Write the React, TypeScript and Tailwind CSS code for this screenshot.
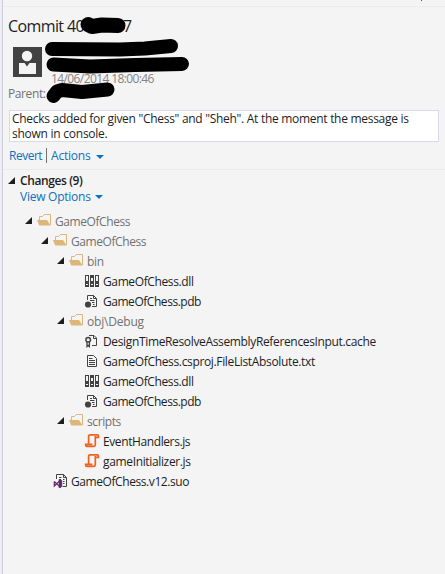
import type { ReactNode } from 'react';

type Kind = 'folder' | 'dll' | 'pdb' | 'cert' | 'text' | 'script' | 'suo';

function FolderIcon() {
  return (
    <svg width="16" height="16" viewBox="0 0 16 16" fill="none">
      <path d="M3.5 8V4.5H6.5L8.5 2.5H14.5V13" stroke="#dcb67a" strokeWidth="1" />
      <path d="M1 8H11L14.5 13.5H3.2Z" fill="#dcb67a" />
    </svg>
  );
}

function DllIcon() {
  return (
    <svg width="16" height="16" viewBox="0 0 16 16" shapeRendering="crispEdges">
      {[1, 6, 11].map((x) => (
        <g key={x}>
          <rect x={x} y="2" width="4" height="12" fill="#424242" />
          <rect x={x + 1} y={x === 6 ? 5 : 3} width="2" height={x === 6 ? 3 : 5} fill="#f4f4f4" />
          <rect x={x + 1} y="11" width="2" height="1" fill="#f4f4f4" />
        </g>
      ))}
    </svg>
  );
}

function PdbIcon() {
  return (
    <svg width="16" height="16" viewBox="0 0 16 16" fill="none" stroke="#424242">
      <path d="M3.5 7V2.5H9.5L12.5 5.5V13.5H8" />
      <path d="M9.5 2.5V5.5H12.5M6 5.5H8M6 7.5H10.5M8 9.5H10.5M9 11.5H10.5" />
      <circle cx="4" cy="11.5" r="3.1" fill="#424242" stroke="none" />
    </svg>
  );
}

function CertIcon() {
  return (
    <svg width="16" height="16" viewBox="0 0 16 16" fill="none" stroke="#424242">
      <path d="M5 2.5H10L12.5 5V12.5H8" />
      <path d="M9.5 2.5V5.5H12.5" />
      <circle cx="4.2" cy="6.8" r="2.3" strokeWidth="1.5" />
      <path d="M3 9V13.5L4.2 12.4L5.4 13.5V9" strokeWidth="1.3" />
    </svg>
  );
}

function TextIcon() {
  return (
    <svg width="16" height="16" viewBox="0 0 16 16" fill="none" stroke="#424242">
      <path d="M3.5 2.5H9.5L12.5 5.5V13.5H3.5Z" />
      <path d="M5 5.5H8.5M5 7.5H11M5 9.5H11M5 11.5H11" />
    </svg>
  );
}

function ScriptIcon() {
  return (
    <svg width="16" height="16" viewBox="0 0 16 16" fill="none" stroke="#ee6221" strokeWidth="1.7">
      <path d="M11.3 3V11.7C11.3 12.8 10.7 13.3 9.8 13.3H2.8C1.9 13.3 1.6 12.5 1.6 11.3H8.4" />
      <path d="M4.6 11V3.5C4.6 2.3 5.2 1.8 6.2 1.8H13.5C14.3 1.8 14.5 2.7 14.5 4.3H11.5" />
    </svg>
  );
}

function SuoIcon() {
  return (
    <svg width="16" height="16" viewBox="0 0 16 16" fill="none" stroke="#424242">
      <path d="M3.5 6V1.5H10.5L13.5 4.5V13.5H9.5" />
      <path d="M10.5 1.5V4.5H13.5M6 4.5H8.5M6 6.5H8M10 6.5H11.5M10 8.5H11.5M10 10.5H11.5" />
      <path d="M1.3 8.5V13L7 7.6V13.9L1.3 8.5" stroke="#68217a" strokeWidth="1.2" />
      <path d="M6.2 6.5L8.7 7.5V13.5L6.2 14.7Z" fill="#68217a" />
    </svg>
  );
}

const icons: Record<Kind, () => ReactNode> = {
  folder: FolderIcon,
  dll: DllIcon,
  pdb: PdbIcon,
  cert: CertIcon,
  text: TextIcon,
  script: ScriptIcon,
  suo: SuoIcon,
};

function Expander() {
  return (
    <svg width="7" height="7" viewBox="0 0 7 7" className="shrink-0">
      <path d="M7 0V7H0Z" fill="#1e1e1e" />
    </svg>
  );
}

function DropArrow() {
  return (
    <svg width="8" height="4" viewBox="0 0 8 4" className="mt-[2px] shrink-0">
      <path d="M0 0H8L4 4Z" fill="#0e70c0" />
    </svg>
  );
}

const rows: { name: string; kind: Kind; indent: string; tracking: string }[] = [
  { name: 'GameOfChess', kind: 'folder', indent: 'pl-[22px]', tracking: 'tracking-[-0.42px]' },
  { name: 'GameOfChess', kind: 'folder', indent: 'pl-[38px]', tracking: 'tracking-[-0.42px]' },
  { name: 'bin', kind: 'folder', indent: 'pl-[54px]', tracking: 'tracking-[-0.3px]' },
  { name: 'GameOfChess.dll', kind: 'dll', indent: 'pl-[81px]', tracking: 'tracking-[-0.38px]' },
  { name: 'GameOfChess.pdb', kind: 'pdb', indent: 'pl-[81px]', tracking: 'tracking-[-0.46px]' },
  { name: 'obj\\Debug', kind: 'folder', indent: 'pl-[54px]', tracking: 'tracking-[-0.2px]' },
  { name: 'DesignTimeResolveAssemblyReferencesInput.cache', kind: 'cert', indent: 'pl-[81px]', tracking: 'tracking-[-0.35px]' },
  { name: 'GameOfChess.csproj.FileListAbsolute.txt', kind: 'text', indent: 'pl-[81px]', tracking: 'tracking-[-0.35px]' },
  { name: 'GameOfChess.dll', kind: 'dll', indent: 'pl-[81px]', tracking: 'tracking-[-0.38px]' },
  { name: 'GameOfChess.pdb', kind: 'pdb', indent: 'pl-[81px]', tracking: 'tracking-[-0.46px]' },
  { name: 'scripts', kind: 'folder', indent: 'pl-[54px]', tracking: 'tracking-[-0.4px]' },
  { name: 'EventHandlers.js', kind: 'script', indent: 'pl-[81px]', tracking: 'tracking-[-0.4px]' },
  { name: 'gameInitializer.js', kind: 'script', indent: 'pl-[81px]', tracking: 'tracking-[-0.35px]' },
  { name: 'GameOfChess.v12.suo', kind: 'suo', indent: 'pl-[50px]', tracking: 'tracking-[-0.42px]' },
];

function TreeRow({ name, kind, indent, tracking }: (typeof rows)[number]) {
  const Icon = icons[kind];
  const folder = kind === 'folder';
  const gap = kind === 'suo' ? 'mr-[2px]' : 'mr-[3px]';
  return (
    <div className={`flex h-5 items-center ${indent}`}>
      {folder && (
        <span className="mt-[-3px] mr-1 flex">
          <Expander />
        </span>
      )}
      <span className={`${gap} ${folder ? 'mt-[-4px]' : 'mt-[-2px]'}`}>
        <Icon />
      </span>
      <span className={`mt-[-1px] ${tracking} ${folder ? 'text-[#717171]' : 'text-[#1e1e1e]'}`}>{name}</span>
    </div>
  );
}

function Redactions() {
  return (
    <svg
      className="absolute top-0 left-0"
      width="225"
      height="110"
      viewBox="0 0 225 110"
      fill="none"
      stroke="#000"
      strokeLinecap="round"
      strokeLinejoin="round"
    >
      <path d="M88 24.5L92 26.5L102 25L118 25.5" strokeWidth="15" />
      <path d="M52 49L120 49.5L145 48.5L171 46" strokeWidth="14" />
      <path d="M53.5 64.5L90 66.5L135 65L182 64" strokeWidth="14" />
      <path d="M53.5 96L57 91.5L62 90L82 92L107.5 89.5" strokeWidth="14" />
    </svg>
  );
}

export default function App() {
  return (
    <div className="relative flex h-[574px] w-[445px] overflow-hidden bg-[#f4f4f4] font-['Open_Sans','Noto_Sans',sans-serif] text-[12px] leading-[15px] whitespace-nowrap text-[#1e1e1e]">
      <div className="w-[3px] shrink-0 border-r border-[#cccedb] bg-[#eeeef2]" />
      <div className="flex min-w-0 flex-1 flex-col">
        <div className="flex h-[7px] items-start justify-end border-b border-[#ececec] pr-[23px]">
          <span className="h-px w-px bg-[#555555]" />
        </div>

        <div className="mt-[8px] flex h-[22px] items-center pl-[5px] text-[16px]">
          <span className="w-[115px] tracking-[-0.6px]">Commit 40</span>
          <span>7</span>
        </div>

        <div className="mt-[10px] flex h-[41px] pl-[10px]">
          <svg width="29" height="30" viewBox="0 0 29 30">
            <rect width="29" height="30" fill="#424242" />
            <circle cx="14" cy="9" r="5.2" fill="#f4f4f4" />
            <path d="M6 16H11.5L14 19.5L16.5 16H23V27H6Z" fill="#f4f4f4" />
          </svg>
          <span className="mt-[24px] ml-[9px] tracking-[-0.6px] text-[#848484]">14/06/2014 18:00:46</span>
        </div>
        <div className="mt-[-2px] pl-[5px] tracking-[-0.4px] text-[#717171]">Parent:</div>

        <div className="mt-[9px] mr-[6px] ml-[6px] h-[32px] border border-[#dadae6] bg-white pl-[2px]">
          <div className="tracking-[-0.29px]">Checks added for given "Chess" and "Sheh". At the moment the message is</div>
          <div className="tracking-[-0.25px]">shown in console.</div>
        </div>

        <div className="mt-[5px] flex h-[17px] items-center pl-[6px] text-[#0e70c0]">
          <span className="w-[37px] tracking-[-0.5px]">Revert</span>
          <span className="h-[15px] w-px bg-[#717171]" />
          <span className="ml-[4px] w-[45px] tracking-[-0.2px]">Actions</span>
          <DropArrow />
        </div>

        <div className="mt-[5px] h-px bg-[#eaeaee]" />

        <div className="mt-[2px] flex h-[16px] items-center pl-[5px]">
          <Expander />
          <span className="ml-[5px] font-semibold tracking-[-0.4px]">Changes (9)</span>
        </div>
        <div className="flex h-[16px] items-center pl-[17px] text-[#0e70c0]">
          <span className="w-[75px] tracking-[-0.25px]">View Options</span>
          <DropArrow />
        </div>

        <div className="mt-[8px] flex flex-col">
          {rows.map((row, i) => (
            <TreeRow key={i} {...row} />
          ))}
        </div>
      </div>
      <Redactions />
    </div>
  );
}
